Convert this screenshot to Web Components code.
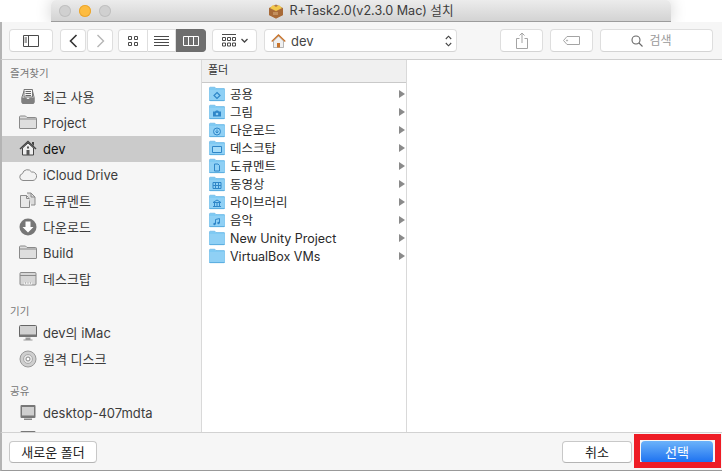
<!DOCTYPE html>
<html lang="ko"><head><meta charset="utf-8"><title>R+Task</title>
<style>
html,body{margin:0;padding:0;background:#fff;width:722px;height:471px;overflow:hidden}
body{font:13px Inter,"Noto Sans CJK KR",sans-serif;color:#333}
</style></head><body>
<finder-dialog>
  <x-titlebar slot="title">R+Task2.0(v2.3.0 Mac) 설치</x-titlebar>
  <x-toolbar slot="toolbar"></x-toolbar>
  <x-sidebar slot="sidebar">
    <x-side-head>즐겨찾기</x-side-head>
    <x-side-item icon="recent">최근 사용</x-side-item>
    <x-side-item icon="folder">Project</x-side-item>
    <x-side-item icon="home" selected>dev</x-side-item>
    <x-side-item icon="cloud">iCloud Drive</x-side-item>
    <x-side-item icon="docs">도큐멘트</x-side-item>
    <x-side-item icon="down">다운로드</x-side-item>
    <x-side-item icon="folder">Build</x-side-item>
    <x-side-item icon="desk">데스크탑</x-side-item>
    <x-side-head gap>기기</x-side-head>
    <x-side-item icon="imac">dev의 iMac</x-side-item>
    <x-side-item icon="disc">원격 디스크</x-side-item>
    <x-side-head gap>공유</x-side-head>
    <x-side-item icon="pc">desktop-407mdta</x-side-item>
    <x-side-item icon="pc"></x-side-item>
  </x-sidebar>
  <x-column slot="column">
    <x-col-row glyph="public">공용</x-col-row>
    <x-col-row glyph="camera">그림</x-col-row>
    <x-col-row glyph="down">다운로드</x-col-row>
    <x-col-row glyph="desk">데스크탑</x-col-row>
    <x-col-row glyph="doc">도큐멘트</x-col-row>
    <x-col-row glyph="film">동영상</x-col-row>
    <x-col-row glyph="lib">라이브러리</x-col-row>
    <x-col-row glyph="music">음악</x-col-row>
    <x-col-row>New Unity Project</x-col-row>
    <x-col-row>VirtualBox VMs</x-col-row>
  </x-column>
  <x-bottombar slot="bottom"></x-bottombar>
</finder-dialog>
<script>
function def(name,css,html,init){
  customElements.define(name,class extends HTMLElement{
    connectedCallback(){
      if(this.shadowRoot)return;
      const r=this.attachShadow({mode:'open'});
      r.innerHTML='<style>'+css+'</style>'+(typeof html==='function'?html(this):html);
      if(init)init(this,r);
    }
  });
}
def('finder-dialog',`
:host{display:grid;grid-template-columns:201px 206px 1fr;grid-template-rows:22px 38px 372px 39px;width:722px;height:471px;position:relative;box-sizing:border-box}
.t{grid-column:1/-1}
.tb{grid-column:1/-1}
.s{display:block;min-height:0;overflow:hidden;border-left:2px solid #b4b4b4;background:#f6f6f6}
.c{display:block;min-height:0;overflow:hidden;border-left:1px solid #d9d9d9;border-right:1px solid #d9d9d9;background:#fff}
.e{background:#fff}
.b{grid-column:1/-1;position:relative;z-index:2}
`,`<div class="t"><slot name="title"></slot></div>
<div class="tb"><slot name="toolbar"></slot></div>
<div class="s"><slot name="sidebar"></slot></div>
<div class="c"><slot name="column"></slot></div>
<div class="e"></div>
<div class="b"><slot name="bottom"></slot></div>`);

def('x-titlebar',`
:host{display:flex;box-sizing:border-box;height:22px;margin:0 51px;align-items:center;position:relative;
 background:linear-gradient(#ececec,#d3d3d3);border-bottom:1px solid #9c9c9c;border-radius:5px 5px 0 0;box-shadow:0 0 16px rgba(0,0,0,.18)}
.l{position:absolute;left:8px;top:5px;display:flex;gap:8px}
.l i{display:block;width:12px;height:12px;border-radius:50%;background:#d0d0d0;box-shadow:inset 0 0 0 1px #c0c0c0}
.l i.y{background:#fdbc40;box-shadow:inset 0 0 0 1px #e9a530}
.m{flex:1;display:flex;justify-content:center;align-items:center;gap:5px;color:#3c3c3c;font-size:12.600px;line-height:16px;padding-right:0}
svg{display:block}
`,`<div class="l"><i></i><i class="y"></i><i></i></div>
<div class="m"><svg width="16" height="16" viewBox="0 0 16 16"><path d="M1 5l7-3.500L15 5v7l-7 3.500L1 12z" fill="#b47a46"/><path d="M1 5l7 3.500L15 5v7l-7 3.500L1 12z" fill="#a86a38"/><path d="M2 5l3-3 3 2 3-2 3 3-6 3z" fill="#f2c84a"/><path d="M5 9l5 0v3l-5 0z" fill="#d4a878" opacity=".6"/></svg><span><slot></slot></span></div>`);

const stroke='fill="none" stroke="currentColor"';
def('x-toolbar',`
:host{display:flex;box-sizing:border-box;height:38px;padding:7px 9px 7px 7px;align-items:flex-start;background:#f6f6f6;border-bottom:1px solid #cfcfcf;border-left:2px solid #b4b4b4;position:relative;z-index:1;color:#4a4a4a}
.b{box-sizing:border-box;height:23px;display:flex;align-items:center;justify-content:center;background:#fff;border:1px solid #dedede;border-bottom-color:#d4d4d4;border-radius:4px;flex:none}
svg{display:block}
.side{width:44px}
.nav{width:26px;border-radius:4px}
.nav+.nav{margin-left:1px;color:#b5b5b5}
.group{display:flex;margin-left:5px}
.group .b{border-radius:0;border-left:0}
.group .b:first-child{border-left:1px solid #dedede;border-radius:4px 0 0 4px;width:30px}
.group .b:nth-child(2){width:28px}
.group .b:last-child{border-radius:0 4px 4px 0;width:30px;background:#6e6e6e;border-color:#6e6e6e;color:#fff}
.arr{width:45px;margin-left:6px;gap:5px}
.path{width:193px;margin-left:7px;justify-content:flex-start;padding-left:6px;gap:5px;color:#444;font-size:13px}
.path .sp{flex:1}
.path .ud{margin-right:4px}
.dim{color:#a4a4a4}
.share{width:43px;margin-left:43px}
.tag{width:43px;margin-left:7px}
.search{width:113px;margin-left:7px;gap:6px;color:#9a9a9a;font-size:12px;line-height:16px;padding-right:10px}
.search svg{color:#666}
`,`<div class="b side"><svg width="16" height="12" viewBox="0 0 16 12" ${stroke}><path d="M.5.500h15v11H.5zM5.500.500v11"/><path d="M1.500 3h2.500M1.500 5h2.500M1.500 7h2.500" stroke-width="1"/></svg></div>
<div class="b nav" style="margin-left:7px"><svg width="9" height="14" viewBox="0 0 9 14" fill="none" stroke="#333" stroke-width="1.600"><path d="M7.500 1L1.500 7l6 6"/></svg></div>
<div class="b nav"><svg width="9" height="14" viewBox="0 0 9 14" fill="none" stroke="currentColor" stroke-width="1.400"><path d="M1.500 1l6 6-6 6"/></svg></div>
<div class="group">
<div class="b"><svg width="10" height="10" viewBox="0 0 10 10" ${stroke}><path d="M.5.500h3v3h-3zM6.500.500h3v3h-3zM.5 6.500h3v3h-3zM6.500 6.500h3v3h-3z"/></svg></div>
<div class="b"><svg width="15" height="10" viewBox="0 0 15 10" ${stroke}><path d="M0 .5h15M0 3.500h15M0 6.500h15M0 9.500h15"/></svg></div>
<div class="b"><svg width="16" height="10" viewBox="0 0 16 10" ${stroke}><path d="M.5.500h15v9H.5zM5.500.500v9M10.500.500v9"/></svg></div>
</div>
<div class="b arr"><svg width="14" height="13" viewBox="0 0 14 13" ${stroke}><path d="M0 .5h14M.5 3.500h3v3h-3zM5.500 3.500h3v3h-3zM10.500 3.500h3v3h-3zM.5 9h3v3h-3zM5.500 9h3v3h-3zM10.500 9h3v3h-3z"/></svg><svg width="7" height="5" viewBox="0 0 7 5" fill="none" stroke="#444" stroke-width="1.300"><path d="M.5 1l3 3 3-3"/></svg></div>
<div class="b path"><svg width="15" height="14" viewBox="0 0 15 14"><path d="M2.500 7v6.500h10V7L7.500 2z" fill="#f0f0f0" stroke="#999" stroke-width=".7"/><path d="M6 9h3v4.500H6z" fill="#c8742c"/><path d="M.7 7.500L7.500 1l6.800 6.500" fill="none" stroke="#c8742c" stroke-width="1.300"/></svg><span>dev</span><span class="sp"></span><svg class="ud" width="7" height="12" viewBox="0 0 7 12" fill="none" stroke="#444" stroke-width="1.100"><path d="M.8 4L3.500 1.200 6.200 4M.8 8l2.700 2.800L6.200 8"/></svg></div>
<div class="b share dim"><svg width="12" height="17" viewBox="0 0 12 17" ${stroke}><path d="M3.500 6.500h-3v10h11v-10h-3M6 11V1M3.500 3.500L6 1l2.500 2.500"/></svg></div>
<div class="b tag dim"><svg width="17" height="9" viewBox="0 0 17 9" ${stroke}><path d="M.5 4.500L4 .5h12.500v8H4z"/><circle cx="4" cy="4.500" r=".6"/></svg></div>
<div class="b search"><svg width="12" height="12" viewBox="0 0 12 12" fill="none" stroke="currentColor" stroke-width="1.100"><circle cx="5" cy="5" r="4"/><path d="M8 8l3.500 3.500"/></svg><span>검색</span></div>`);

def('x-sidebar',`:host{display:block;padding-top:1px;background:#f6f6f6;height:372px;overflow:hidden}`,'<slot></slot>');
def('x-side-head',`:host{display:block;box-sizing:border-box;height:23px;padding:5px 0 0 8px;font-size:10.500px;line-height:15px;color:#777}
:host([gap]){height:28px;padding-top:12px}`,'<slot></slot>');

const G='#8a8a8a';
const sideIcons={
recent:`<path d="M5 1.500h8.500V9H5z" fill="#f6f6f6" stroke="#777"/><path d="M6.500 3.500h5.500M6.500 5.500h5.500M6.500 7.500h5.500" stroke="#666"/><path d="M5 3L3 9v5a1.500 1.500 0 0 0 1.500 1.500h9A1.500 1.500 0 0 0 15 14V9l-1.500-6" fill="none" stroke="#777"/><path d="M2.500 9.500h5a1.500 1.500 0 0 0 3 0h5V14a2 2 0 0 1-2 2h-9a2 2 0 0 1-2-2z" fill="#808080"/>`,
folder:`<path d="M.5 3a1 1 0 0 1 1-1h5l1.500 1.500h8.500a1 1 0 0 1 1 1V14a.5.500 0 0 1-.5.500H1a.5.500 0 0 1-.5-.5z" fill="#dedede" stroke="${G}"/><path d="M.5 5h17" stroke="${G}"/>`,
home:`<path d="M3.500 8v7h11V8L9 3z" fill="#eee" stroke="#444"/><path d="M7.500 10h3v5h-3z" fill="#555"/><path d="M8 6.500h2v2H8z" fill="#555"/><path d="M1 9l8-7.500L17 9" fill="none" stroke="#444" stroke-width="1.500"/><path d="M13 2h2v4l-2-2z" fill="#444"/>`,
cloud:`<path d="M4 14.500A3.500 3.500 0 0 1 3.500 7.600 5 5 0 0 1 12.600 6a4.300 4.300 0 0 1 1.400 8.500z" fill="#f2f2f2" stroke="${G}"/>`,
docs:`<path d="M1.500 3.500h6l3 3v9h-9z" fill="#e8e8e8" stroke="${G}"/><path d="M8 1h4l4 4v8h-4" fill="#dcdcdc" stroke="${G}"/><path d="M12 1v4h4M7.500 3.500v3h3" fill="none" stroke="${G}"/>`,
down:`<circle cx="9" cy="9" r="8.500" fill="#777"/><path d="M6.500 3.500h5V9h3L9 14.500 3.500 9h3z" fill="#fff"/>`,
desk:`<path d="M1 3.500a1 1 0 0 1 1-1h14a1 1 0 0 1 1 1V14a1 1 0 0 1-1 1H2a1 1 0 0 1-1-1z" fill="#d6d6d6" stroke="${G}"/><path d="M1 5.500h16" stroke="${G}"/><path d="M5 12.500h8v2H5z" fill="#f4f4f4"/><path d="M6 13h1M8.500 13h1M11 13h1" stroke="#888"/>`,
imac:`<path d="M.5 2.500a1 1 0 0 1 1-1h15a1 1 0 0 1 1 1v10H.5z" fill="#d2d2d2" stroke="#666"/><path d="M.5 10.500h17v2.500H.5z" fill="#777"/><path d="M6.500 13.500h5v2h2v1h-9v-1h2z" fill="#999"/>`,
disc:`<circle cx="9" cy="9" r="8" fill="#cfcfcf" stroke="#999"/><circle cx="9" cy="9" r="4.500" fill="#e6e6e6" stroke="#aaa"/><circle cx="9" cy="9" r="2" fill="#fff" stroke="#888"/>`,
pc:`<path d="M1.500 2a1 1 0 0 1 1-1h13a1 1 0 0 1 1 1v11a1 1 0 0 1-1 1h-13a1 1 0 0 1-1-1z" fill="#777"/><path d="M3 3h12v8.500H3z" fill="#cfcfcf"/><path d="M5 14.500h8v1.500H5z" fill="#888"/>`
};
def('x-side-item',`
:host{display:flex;box-sizing:border-box;height:26px;align-items:center;padding-left:17px;gap:6px;font-size:13px;line-height:16px;color:#3c3c3c;white-space:nowrap}
:host([selected]){background:#cbcbcb;color:#111;font-weight:normal}
svg{display:block;flex:none}
`,h=>`<svg width="18" height="18" viewBox="0 0 18 18">${sideIcons[h.getAttribute('icon')]||''}</svg><span><slot></slot></span>`);

def('x-column',`
:host{display:block;height:372px;background:#fff}
.h{box-sizing:border-box;height:23px;background:#f0f0f0;border-bottom:1px solid #c9c9c9;padding:3px 0 0 6px;font-size:11px;line-height:15px;color:#333}
.r{padding-top:2px}
`,`<div class="h">폴더</div><div class="r"><slot></slot></div>`);

const glyphs={
public:`<path d="M8 6.500l3 3-3 3-3-3z" fill="none" stroke="#2f86c8" stroke-width="1.200"/>`,
camera:`<path d="M4 7.500h2l1-1h2l1 1h2v5H4z" fill="#2f86c8"/><circle cx="8" cy="10" r="1.300" fill="#8fd0f5"/>`,
down:`<circle cx="8" cy="9.500" r="3.500" fill="none" stroke="#2f86c8"/><path d="M8 7.500v3.500M6.500 9.500L8 11l1.500-1.500" fill="none" stroke="#2f86c8"/>`,
desk:`<path d="M3.500 6.500h9v6h-9z" fill="#a6dcf8" stroke="#2f86c8"/>`,
doc:`<path d="M5.500 6h3.500l1.500 1.500v5.500h-5z" fill="none" stroke="#2f86c8"/>`,
film:`<path d="M4 6.500h8v6H4zM6.500 6.500v6M9.500 6.500v6M4 9.500h8" fill="none" stroke="#2f86c8"/>`,
lib:`<path d="M4 8.500L8 6l4 2.500zM4 12.500h8M5.500 9v3M8 9v3M10.500 9v3" fill="none" stroke="#2f86c8"/>`,
music:`<path d="M6.500 12V7.500l4-1V11" fill="none" stroke="#2f86c8"/><circle cx="5.500" cy="12" r="1.200" fill="#2f86c8"/><circle cx="9.500" cy="11" r="1.200" fill="#2f86c8"/>`
};
def('x-col-row',`
:host{display:flex;box-sizing:border-box;height:18px;align-items:center;padding-left:7px;font-size:12.500px;line-height:16px;color:#2a2a2a;white-space:nowrap}
svg{display:block;flex:none;margin-right:5px}
.t{flex:1;padding-top:2px}
.a{width:0;height:0;border-left:6px solid #8a8a8a;border-top:4px solid transparent;border-bottom:4px solid transparent;margin-right:1px}
`,h=>`<svg width="16" height="16" viewBox="0 0 16 16"><path d="M.5 2a.8.800 0 0 1 .8-.8h4.500L7 2.500h8a.6.600 0 0 1 .6.600v11a.6.600 0 0 1-.6.600H1a.5.500 0 0 1-.5-.5z" fill="#7fcaf3" stroke="#5cb0e2" stroke-width=".6"/><path d="M.5 4h15v10.500H.5z" fill="#8fd0f5"/><path d="M.5 14h15v.7H.5z" fill="#4da4da"/>${glyphs[h.getAttribute('glyph')]||''}</svg><span class="t"><slot></slot></span><span class="a"></span>`);

def('x-bottombar',`
:host{display:flex;box-sizing:border-box;height:39px;align-items:flex-start;padding:8px 9px 0 7px;background:#f6f6f6;border-top:1px solid #d2d2d2;border-bottom:1px solid #999;border-left:2px solid #b4b4b4;font-size:13px;line-height:16px;color:#222;position:relative}
.b{box-sizing:border-box;height:22px;display:flex;align-items:center;justify-content:center;background:#fff;border:1px solid #c8c8c8;border-bottom-color:#b4b4b4;border-radius:4px}
.new{width:88px}
.sp{flex:1}
.cancel{width:70px}
.ok{width:72px;margin-left:9px;border:0;color:#fff;background:linear-gradient(#6cb3fa,#1a6ff0)}
.mark{position:absolute;left:632px;top:1px;width:87px;height:34px;box-sizing:border-box;border:6px solid #ee1c25}
`,`<div class="b new">새로운 폴더</div><div class="sp"></div><div class="b cancel">취소</div><div class="b ok">선택</div><div class="mark"></div>`);
</script>
</body></html>
